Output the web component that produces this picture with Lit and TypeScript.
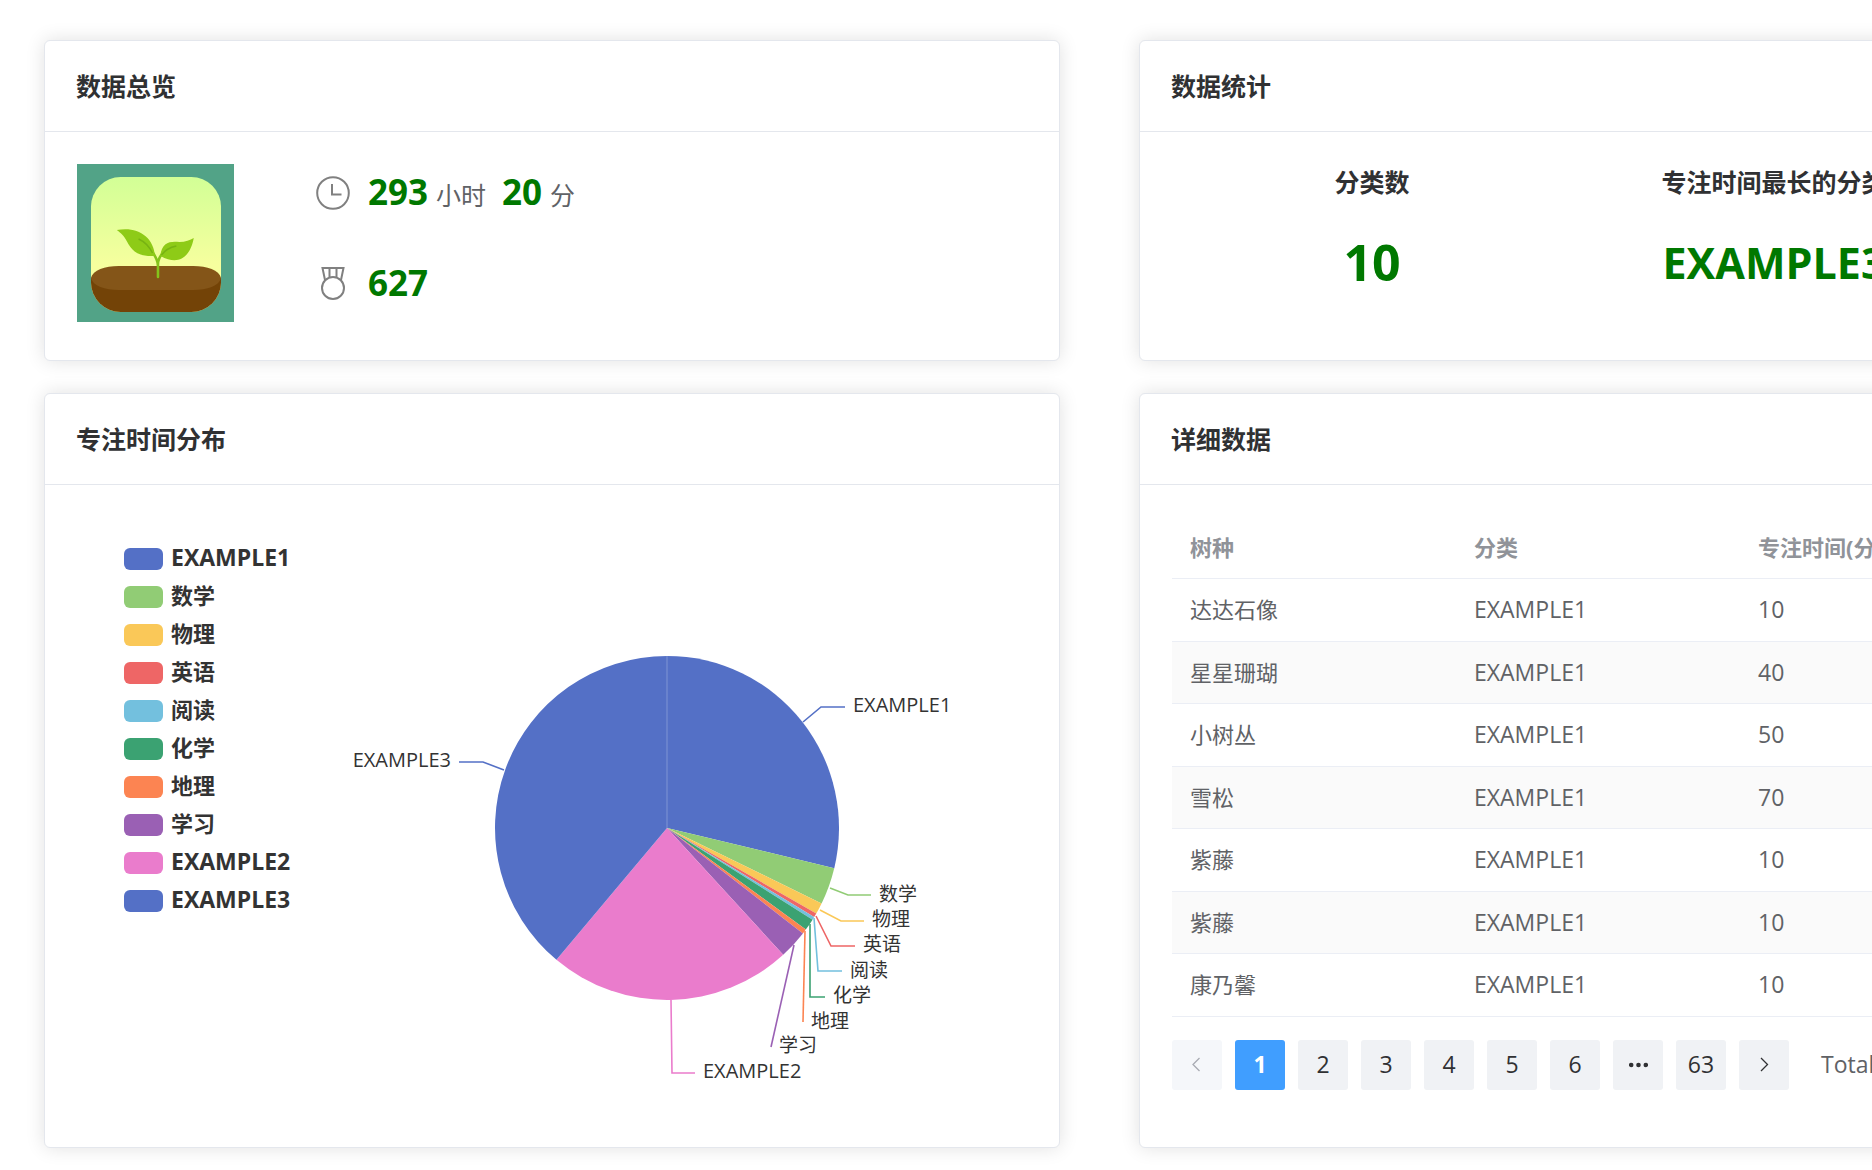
import { LitElement, html, svg, css } from "lit";
import { customElement, state } from "lit/decorators.js";

type Slice = {
  name: string;
  color: string;
  to: number;
  line: string;
  x: number;
  y: number;
  anchor?: string;
};

// Angles are degrees clockwise from the top; points are relative to the pie centre.
const RADIUS = 172;
const slices: Slice[] = [
  { name: "EXAMPLE1", color: "#5470c6", to: 103.5, line: "136,-106 154,-121 178,-121", x: 186, y: -116 },
  { name: "数学", color: "#91cc75", to: 116, line: "163,60 181,67 204,67", x: 212, y: 73 },
  { name: "物理", color: "#fac858", to: 119.8, line: "153,82 174,93 197,93", x: 205, y: 98 },
  { name: "英语", color: "#ee6666", to: 121.2, line: "149,88 164,118 188,118", x: 196, y: 123 },
  { name: "阅读", color: "#73c0de", to: 122.2, line: "147,90 151,143 175,143", x: 183, y: 149 },
  { name: "化学", color: "#3ba272", to: 126.2, line: "143,96 143,169 158,169", x: 166, y: 174 },
  { name: "地理", color: "#fc8452", to: 127.8, line: "138,103 136,194", x: 144, y: 200 },
  { name: "学习", color: "#9a60b4", to: 137.5, line: "127,117 104,219", x: 112, y: 224 },
  { name: "EXAMPLE2", color: "#ea7ccc", to: 220, line: "4,172 5,245 28,245", x: 36, y: 250 },
  { name: "EXAMPLE3", color: "#5470c6", to: 360, line: "-163,-58 -184,-66 -208,-66", x: -216, y: -61, anchor: "end" },
];

const rows = [
  ["达达石像", "EXAMPLE1", 10],
  ["星星珊瑚", "EXAMPLE1", 40],
  ["小树丛", "EXAMPLE1", 50],
  ["雪松", "EXAMPLE1", 70],
  ["紫藤", "EXAMPLE1", 10],
  ["紫藤", "EXAMPLE1", 10],
  ["康乃馨", "EXAMPLE1", 10],
];

const isLatin = (text: string) => /^[A-Z]/.test(text);

const point = (deg: number) => {
  const a = (deg * Math.PI) / 180;
  return `${(RADIUS * Math.sin(a)).toFixed(2)} ${(-RADIUS * Math.cos(a)).toFixed(2)}`;
};

const sector = (from: number, to: number) =>
  `M0 0L${point(from)}A${RADIUS} ${RADIUS} 0 ${to - from > 180 ? 1 : 0} 1 ${point(to)}Z`;

@customElement("data-card")
export class DataCard extends LitElement {
  static properties = { heading: {} };
  declare heading: string;

  static styles = css`
    :host {
      display: flex;
      flex-direction: column;
      box-sizing: border-box;
      border: 1px solid #e4e7ed;
      border-radius: 6px;
      background: #fff;
      box-shadow: 0 0 19px rgba(0, 0, 0, 0.12);
    }
    .heading {
      margin: 0;
      padding: 28px 31px;
      border-bottom: 1px solid #e4e7ed;
      font-size: 25px;
      line-height: 34px;
      font-weight: 700;
      color: #303133;
    }
    .body {
      flex: 1;
      padding: 32px;
    }
  `;

  render() {
    return html`<h2 class="heading">${this.heading}</h2>
      <div class="body"><slot></slot></div>`;
  }
}

@customElement("focus-pie")
export class FocusPie extends LitElement {
  static styles = css`
    :host {
      display: grid;
      grid-template-columns: 214px 640px;
      padding: 31px 0 0 47px;
    }
    .legend {
      display: flex;
      flex-direction: column;
      gap: 16px;
      margin: 0;
      padding: 0;
      list-style: none;
    }
    .key {
      display: flex;
      align-items: center;
      gap: 8px;
      height: 22px;
      padding: 0;
      border: 0;
      background: none;
      font-family: inherit;
      font-size: 22px;
      font-weight: 700;
      line-height: 22px;
      color: #333;
      cursor: pointer;
    }
    .label {
      padding-bottom: 4px;
    }
    .label.latin {
      font-size: 23px;
    }
    .swatch {
      width: 39px;
      height: 22px;
      border-radius: 6px;
    }
    .chart {
      width: 640px;
      height: 460px;
      margin-top: 90px;
      font-size: 19px;
      fill: #333;
    }
    .tag.latin {
      font-size: 20px;
    }
    .leader {
      fill: none;
      stroke-width: 1.6;
    }
    .seam {
      stroke: #7f94d4;
    }
  `;

  render() {
    return html`
      <ul class="legend">
        ${slices.map(
          (s) => html`<li>
            <button class="key" type="button">
              <span class="swatch" style="background:${s.color}"></span>
              <span class="label ${isLatin(s.name) ? "latin" : ""}">${s.name}</span>
            </button>
          </li>`
        )}
      </ul>
      <svg class="chart" viewBox="-329 -190 640 460" role="img" aria-label="专注时间分布">
        ${slices.map(
          (s, i) => svg`<path d=${sector(i ? slices[i - 1].to : 0, s.to)} fill=${s.color}></path>`
        )}
        <line class="seam" x1="0" y1="-172" x2="0" y2="0"></line>
        ${slices.map(
          (s) => svg`<polyline class="leader" points=${s.line} stroke=${s.color}></polyline>
            <text class="tag ${isLatin(s.name) ? "latin" : ""}" x=${s.x} y=${s.y} text-anchor=${s.anchor ?? "start"}>${s.name}</text>`
        )}
      </svg>
    `;
  }
}

@customElement("tree-table")
export class TreeTable extends LitElement {
  @state() private page = 1;

  static styles = css`
    .table {
      width: 100%;
      border-collapse: separate;
      border-spacing: 0;
      table-layout: fixed;
      font-size: 22px;
      line-height: 36px;
      color: #606266;
    }
    .name,
    .kind {
      width: 284px;
    }
    th,
    td {
      box-sizing: border-box;
      height: 62px;
      padding: 0 18px 2px;
      border-bottom: 1px solid #ebeef5;
      text-align: left;
      white-space: nowrap;
    }
    th {
      font-weight: 700;
      color: #909399;
    }
    td + td {
      font-size: 23px;
    }
    tbody tr:nth-child(odd) td {
      height: 63px;
    }
    tbody tr:nth-child(even) td {
      background: #fafafa;
    }
    .pager {
      display: flex;
      align-items: center;
      gap: 13px;
      padding: 23px 0 25px;
      font-size: 23px;
      line-height: 32px;
      color: #606266;
    }
    .page {
      display: flex;
      align-items: center;
      justify-content: center;
      flex: none;
      width: 50px;
      height: 50px;
      padding: 0 0 2px;
      border: 0;
      border-radius: 3px;
      background: #f0f2f5;
      font-family: inherit;
      font-size: 23px;
      line-height: 32px;
      color: #303133;
      cursor: pointer;
    }
    .page:disabled {
      background: #f5f7fa;
      color: #a8abb2;
    }
    .current {
      background: #409eff;
      color: #fff;
      font-weight: 700;
    }
    .total {
      margin-left: 19px;
      padding-bottom: 2px;
      white-space: nowrap;
    }
    .arrow {
      width: 19px;
      height: 19px;
    }
  `;

  private pageButton(n: number) {
    return html`<button
      class="page ${n === this.page ? "current" : ""}"
      type="button"
      @click=${() => (this.page = n)}
    >
      ${n}
    </button>`;
  }

  render() {
    return html`
      <table class="table">
        <thead>
          <tr>
            <th class="name" scope="col">树种</th>
            <th class="kind" scope="col">分类</th>
            <th scope="col">专注时间(分钟)</th>
          </tr>
        </thead>
        <tbody>
          ${rows.map((r) => html`<tr>${r.map((c) => html`<td>${c}</td>`)}</tr>`)}
        </tbody>
      </table>
      <nav class="pager" aria-label="分页">
        <button
          class="page"
          type="button"
          aria-label="上一页"
          ?disabled=${this.page === 1}
          @click=${() => (this.page -= 1)}
        >
          <svg class="arrow" viewBox="0 0 19 19" fill="none" stroke="currentColor" stroke-width="1.3">
            <path d="M11.500 3L5 9.500L11.500 16"></path>
          </svg>
        </button>
        ${[1, 2, 3, 4, 5, 6].map((n) => this.pageButton(n))}
        <button class="page" type="button" aria-label="更多" @click=${() => (this.page = 7)}>
          <svg class="arrow" viewBox="0 0 19 19" fill="currentColor">
            <circle cx="2.2" cy="10" r="2.300"></circle>
            <circle cx="9.5" cy="10" r="2.300"></circle>
            <circle cx="16.8" cy="10" r="2.300"></circle>
          </svg>
        </button>
        ${this.pageButton(63)}
        <button
          class="page"
          type="button"
          aria-label="下一页"
          ?disabled=${this.page === 63}
          @click=${() => (this.page += 1)}
        >
          <svg class="arrow" viewBox="0 0 19 19" fill="none" stroke="currentColor" stroke-width="1.3">
            <path d="M6 3L12.500 9.500L6 16"></path>
          </svg>
        </button>
        <span class="total">Total 627</span>
      </nav>
    `;
  }
}

@customElement("app-root")
export class AppRoot extends LitElement {
  static styles = css`
    :host {
      display: block;
      overflow: hidden;
      background: #fff;
      font-family: "Open Sans", "Noto Sans CJK SC", sans-serif;
      color: #606266;
    }
    .board {
      display: grid;
      grid-template-columns: repeat(2, minmax(1016px, 1fr));
      gap: 32px 79px;
      padding: 40px 44px 22px;
    }
    .overview {
      display: flex;
      gap: 80px;
      padding-bottom: 6px;
    }
    .logo {
      flex: none;
      width: 157px;
      height: 158px;
    }
    .facts {
      display: flex;
      flex-direction: column;
      gap: 42px;
      padding-top: 5px;
    }
    .fact {
      display: flex;
      align-items: center;
      gap: 16px;
      height: 48px;
      font-size: 25px;
      line-height: 48px;
    }
    .fact-icon {
      width: 38px;
      height: 38px;
      fill: none;
      stroke: #808080;
      stroke-width: 2;
    }
    .amount {
      display: flex;
      align-items: baseline;
      gap: 8px;
    }
    .number {
      font-size: 35px;
      font-weight: 700;
      color: #007800;
    }
    .next {
      margin-left: 8px;
    }
    .stats {
      display: grid;
      grid-template-columns: 400px 404px;
      row-gap: 17px;
      justify-items: center;
      white-space: nowrap;
      font-weight: 700;
    }
    .stat-name {
      font-size: 25px;
      line-height: 36px;
      color: #303133;
    }
    .stat-value {
      display: flex;
      align-items: center;
      height: 90px;
      font-size: 50px;
      color: #007800;
    }
    .word {
      font-size: 43px;
    }
  `;

  render() {
    return html`
      <main class="board">
        <data-card heading="数据总览">
          <div class="overview">
            <svg class="logo" viewBox="0 0 158 158" preserveAspectRatio="none" role="img" aria-label="Forest">
              <defs>
                <linearGradient id="sky" x1="0" y1="0" x2="0" y2="1">
                  <stop offset="0" stop-color="#d2ff96"></stop>
                  <stop offset="0.65" stop-color="#f6ff9e"></stop>
                </linearGradient>
                <clipPath id="tile"><rect x="14" y="13" width="131" height="135" rx="30"></rect></clipPath>
              </defs>
              <rect width="158" height="158" fill="#52a387"></rect>
              <g clip-path="url(#tile)">
                <rect x="14" y="13" width="131" height="135" fill="url(#sky)"></rect>
                <path d="M14 114V158H145V114Z" fill="#734307"></path>
                <path d="M14 114C16 106 28 102 42 102H117C131 102 143 106 145 114C143 122 131 126 117 126H42C28 126 16 122 14 114Z" fill="#845518"></path>
              </g>
              <path d="M81.500 113V100C81.500 95 85 89 93 82M81.500 102C81.500 95 76 87 68 79" fill="none" stroke="#84c41b" stroke-width="2.600" stroke-linecap="round"></path>
              <path d="M40 66C60 62 77 72 78.500 92C62 93 55 87 50 77C47 71 44 69 40 66Z" fill="#8ecb17"></path>
              <path d="M84 92C85 78 94 77 103 78C109 78 114 76 117.500 74C115 88 106 104 84 92Z" fill="#8ecb17"></path>
              <path d="M62 75Q71 79 76 89M100 82Q90 84 85 91" fill="none" stroke="#77b312" stroke-width="1.500"></path>
            </svg>
            <div class="facts">
              <div class="fact">
                <svg class="fact-icon" viewBox="0 0 38 38" aria-hidden="true">
                  <circle cx="19" cy="19" r="15.800"></circle>
                  <path d="M18 10V20.500H27.500"></path>
                </svg>
                <span class="amount">
                  <span class="number">293</span><span>小时</span>
                  <span class="number next">20</span><span>分</span>
                </span>
              </div>
              <div class="fact">
                <svg class="fact-icon" viewBox="0 0 38 38" aria-hidden="true">
                  <circle cx="19" cy="24" r="11"></circle>
                  <path d="M11 16L8.500 4H29.500L27 16M15.500 4V13.500M22.500 4V13.500"></path>
                </svg>
                <span class="number">627</span>
              </div>
            </div>
          </div>
        </data-card>
        <data-card heading="数据统计">
          <div class="stats">
            <span class="stat-name">分类数</span>
            <span class="stat-name">专注时间最长的分类</span>
            <span class="stat-value">10</span>
            <span class="stat-value word">EXAMPLE3</span>
          </div>
        </data-card>
        <data-card heading="专注时间分布"><focus-pie></focus-pie></data-card>
        <data-card heading="详细数据"><tree-table></tree-table></data-card>
      </main>
    `;
  }
}
